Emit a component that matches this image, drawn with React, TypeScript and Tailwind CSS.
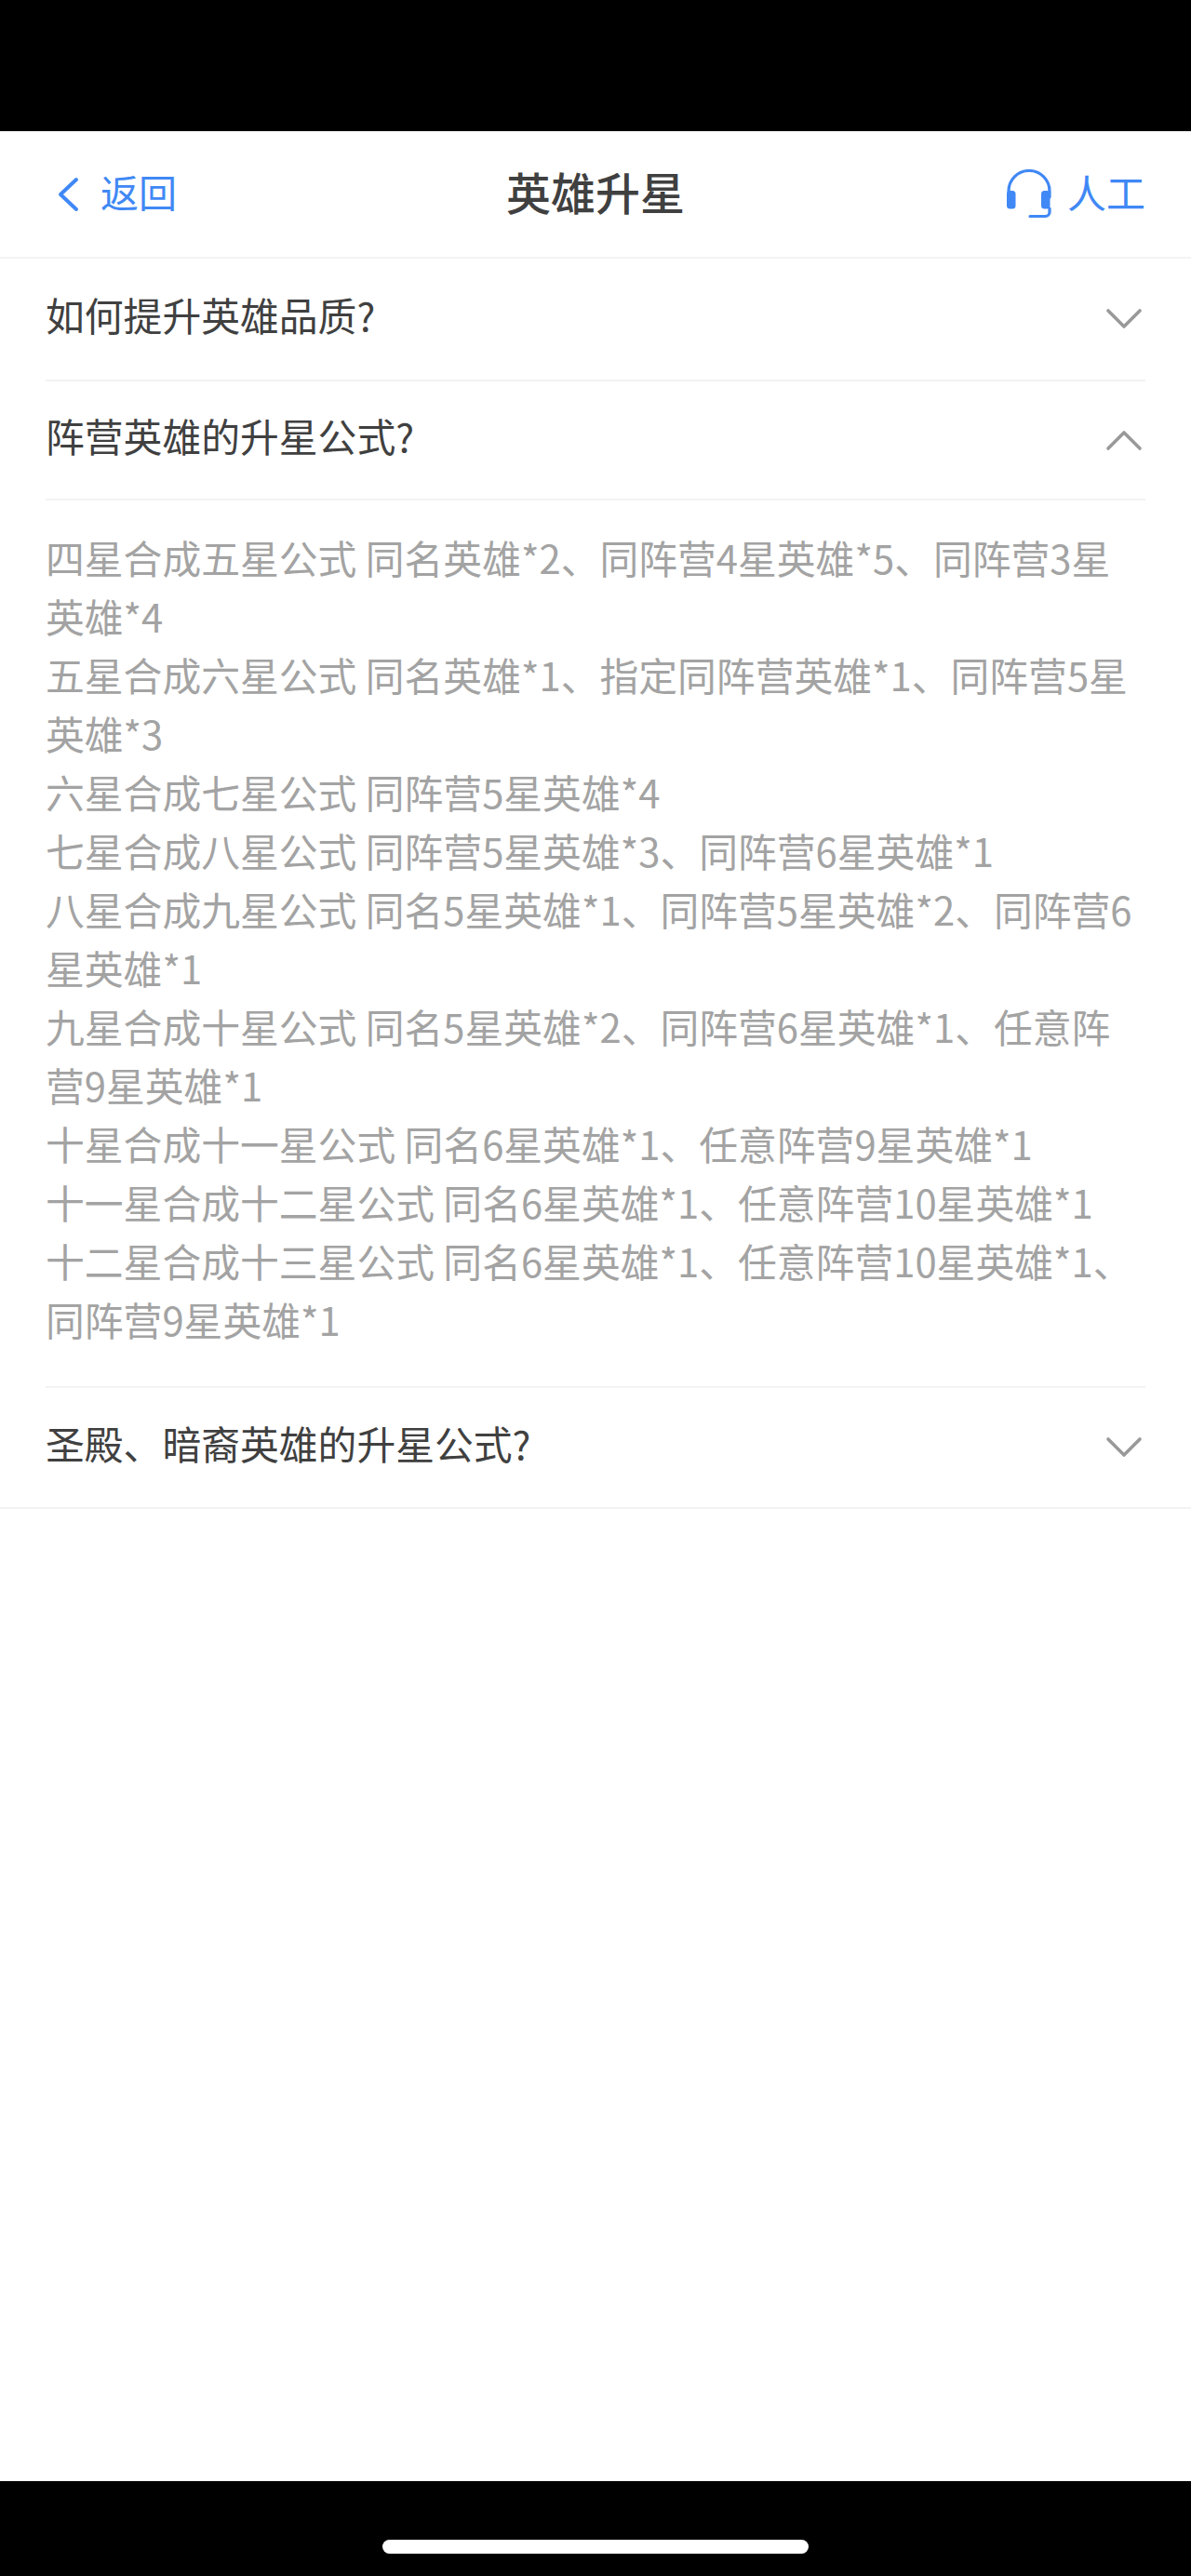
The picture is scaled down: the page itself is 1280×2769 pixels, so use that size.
const answerLines = [
  "四星合成五星公式 同名英雄*2、同阵营4星英雄*5、同阵营3星英雄*4",
  "五星合成六星公式 同名英雄*1、指定同阵营英雄*1、同阵营5星英雄*3",
  "六星合成七星公式 同阵营5星英雄*4",
  "七星合成八星公式 同阵营5星英雄*3、同阵营6星英雄*1",
  "八星合成九星公式 同名5星英雄*1、同阵营5星英雄*2、同阵营6星英雄*1",
  "九星合成十星公式 同名5星英雄*2、同阵营6星英雄*1、任意阵营9星英雄*1",
  "十星合成十一星公式 同名6星英雄*1、任意阵营9星英雄*1",
  "十一星合成十二星公式 同名6星英雄*1、任意阵营10星英雄*1",
  "十二星合成十三星公式 同名6星英雄*1、任意阵营10星英雄*1、同阵营9星英雄*1",
];

const Chevron = ({ up = false }: { up?: boolean }) => (
  <svg width="40" height="24" viewBox="0 0 40 24" fill="none" className="shrink-0">
    <path
      d={up ? "M3 21 L20 4 L37 21" : "M3 3 L20 20 L37 3"}
      stroke="#999999"
      strokeWidth="3.6"
      strokeLinecap="round"
      strokeLinejoin="round"
    />
  </svg>
);

const Headset = () => (
  <svg width="48" height="53" viewBox="0 0 48 53" fill="none" className="shrink-0">
    <path d="M2 30 V23.5 A22 22 0 0 1 46 23.5 V30" stroke="#4088F5" strokeWidth="3.2" strokeLinecap="round" />
    <rect x="0" y="23" width="9.5" height="19.5" rx="3.5" fill="#4088F5" />
    <rect x="37" y="23" width="9.5" height="19.5" rx="3.5" fill="#4088F5" />
    <path d="M46 42 V46 A4.5 4.5 0 0 1 41.5 50.5 H25" stroke="#4088F5" strokeWidth="3.2" strokeLinecap="round" />
  </svg>
);

const Question = ({ text, up, className }: { text: string; up?: boolean; className: string }) => (
  <div className={`flex items-center justify-between text-[41.8px] leading-[63px] text-[#404040] ${className}`}>
    <span className="pb-[10px]">{text}</span>
    <span className="pr-[3px]">
      <Chevron up={up} />
    </span>
  </div>
);

export default function App() {
  return (
    <div className="flex h-[2769px] w-[1280px] flex-col bg-white font-['Noto_Sans_CJK_SC','Noto_Sans',sans-serif]">
      <div className="h-[141px] shrink-0 bg-black" />

      <header className="grid h-[137px] shrink-0 grid-cols-3 items-center border-b-2 border-[#f3f3f3] px-[49px]">
        <div className="flex items-center gap-[23px] pl-[12px] text-[#4088f5]">
          <svg width="24" height="38" viewBox="0 0 24 38" fill="none" className="shrink-0">
            <path d="M21 3 L4 19 L21 35" stroke="#4088F5" strokeWidth="4" strokeLinecap="round" strokeLinejoin="round" />
          </svg>
          <span className="pb-[6px] text-[41px] leading-[63px]">返回</span>
        </div>
        <h1 className="pb-[6px] text-center text-[48px] leading-[63px] font-medium text-[#404040]">英雄升星</h1>
        <div className="flex items-center justify-end gap-[17px] text-[#4088f5]">
          <Headset />
          <span className="pb-[6px] text-[42px] leading-[63px]">人工</span>
        </div>
      </header>

      <div className="px-[49px]">
        <Question text="如何提升英雄品质?" className="h-[132px] border-b-2 border-[#f3f3f3]" />
        <Question text="阵营英雄的升星公式?" up className="h-[128px] border-b-2 border-[#f3f3f3]" />
        <div className="border-b-2 border-[#f3f3f3] pt-[30px] pb-[40px] text-[41.8px] leading-[63px] text-[#a3a3a3]">
          {answerLines.map((line) => (
            <p key={line}>{line}</p>
          ))}
        </div>
        <Question text="圣殿、暗裔英雄的升星公式?" className="h-[128px]" />
      </div>
      <div className="h-[2px] shrink-0 bg-[#f3f3f3]" />

      <div className="flex-1" />

      <footer className="flex h-[102px] shrink-0 justify-center bg-black pt-[63px]">
        <div className="h-[15px] w-[458px] rounded-full bg-white" />
      </footer>
    </div>
  );
}
